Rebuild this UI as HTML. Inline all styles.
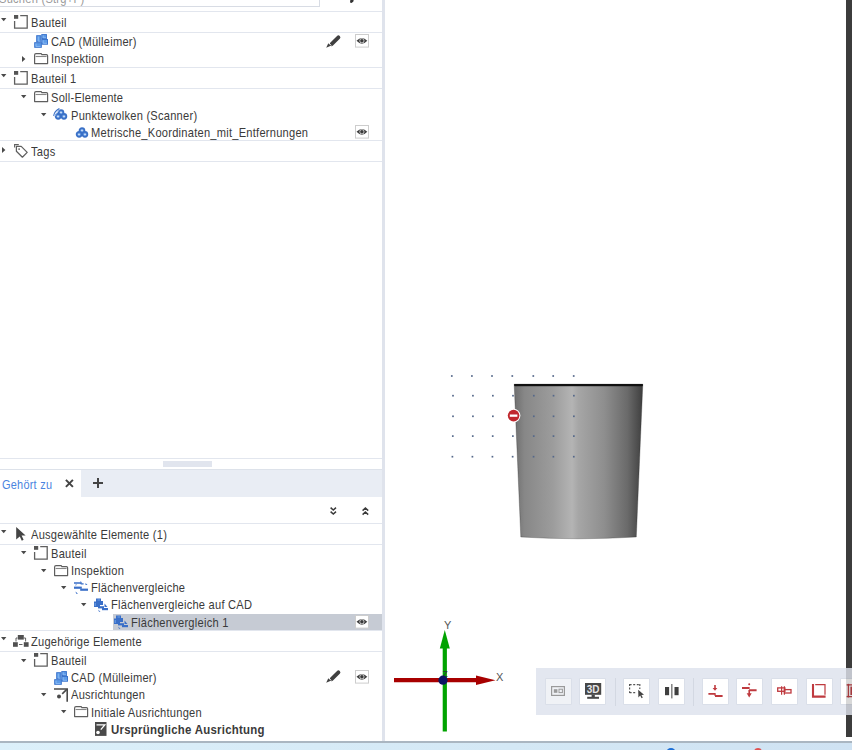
<!DOCTYPE html><html><head><meta charset="utf-8"><style>html,body{margin:0;padding:0;}body{width:852px;height:750px;overflow:hidden;position:relative;background:#fff;font-family:"Liberation Sans",sans-serif;}</style></head><body>
<div style="position:absolute;left:-2px;top:-9px;width:321.5px;height:16px;background:#fff;border:1px solid #d8dce4;box-sizing:border-box"></div>
<div style="position:absolute;left:-1px;top:-9.00px;font-size:12.7px;line-height:16px;color:#9a9a9a;font-weight:normal;white-space:nowrap;letter-spacing:0.28px;transform:scaleX(0.875);transform-origin:0 0;">Suchen (Strg+F)</div>
<svg style="position:absolute;left:349px;top:0px;overflow:visible" width="6" height="4" viewBox="0 0 6 4"><polygon points="1.4,-1 4.8,-1 4.4,1.6 2.6,3 1,2.4" fill="#333"/></svg>
<div style="position:absolute;left:0px;top:11px;width:382px;height:1px;background:#e2e6ee"></div>
<div style="position:absolute;left:0px;top:32px;width:382px;height:1px;background:#e2e6ee"></div>
<div style="position:absolute;left:0px;top:67px;width:382px;height:1px;background:#e2e6ee"></div>
<div style="position:absolute;left:0px;top:88px;width:382px;height:1px;background:#e2e6ee"></div>
<div style="position:absolute;left:0px;top:140px;width:382px;height:1px;background:#e2e6ee"></div>
<div style="position:absolute;left:0px;top:161px;width:382px;height:1px;background:#e2e6ee"></div>
<svg style="position:absolute;left:0.8px;top:17.999999999999996px;overflow:visible" width="6" height="4" viewBox="0 0 6 4"><polygon points="0,0 5.4,0 2.7,3.2" fill="#4a4a4a"/></svg>
<svg style="position:absolute;left:14px;top:14.999999999999998px;overflow:visible" width="15" height="15" viewBox="0 0 15 15"><rect x="0" y="0" width="4.2" height="3.8" fill="#555"/><path d="M6.2,0.6 H13.2 V13.2 H0.6 V6" fill="none" stroke="#5f5f5f" stroke-width="1.3"/></svg>
<div style="position:absolute;left:31.2px;top:14.60px;font-size:12.7px;line-height:16px;color:#3a3a3a;font-weight:normal;white-space:nowrap;letter-spacing:0.28px;transform:scaleX(0.875);transform-origin:0 0;">Bauteil</div>
<svg style="position:absolute;left:34px;top:34.300000000000004px;overflow:visible" width="15" height="14" viewBox="0 0 15 14"><rect x="2.7" y="1.7" width="4.1" height="6.0" fill="#5d9be8" stroke="#3b74cc" stroke-width="1"/><rect x="7.8" y="0.6" width="4.6" height="3.9000000000000004" fill="#5d9be8" stroke="#3b74cc" stroke-width="1"/><rect x="7.8" y="5.5" width="5.7" height="4.7" fill="#5d9be8" stroke="#3b74cc" stroke-width="1"/><rect x="0.7" y="8.7" width="6.6" height="4.6" fill="#5d9be8" stroke="#3b74cc" stroke-width="1"/><path d="M4.3,2.5 V7.2 H6.5 M9.2,1.4 V3.8 H12 M9.2,6.3 V9.3 H13 M2,9.5 V12.6 H6.5" fill="none" stroke="#8cbcf4" stroke-width="0.9"/></svg>
<div style="position:absolute;left:51.2px;top:34.20px;font-size:12.7px;line-height:16px;color:#3a3a3a;font-weight:normal;white-space:nowrap;letter-spacing:0.28px;transform:scaleX(0.875);transform-origin:0 0;">CAD (Mülleimer)</div>
<svg style="position:absolute;left:22.0px;top:55.8px;overflow:visible" width="4" height="7" viewBox="0 0 4 7"><polygon points="0,0 3.4,3 0,6" fill="#4a4a4a"/></svg>
<svg style="position:absolute;left:34px;top:52.75px;overflow:visible" width="15" height="12" viewBox="0 0 15 12"><path d="M0.6,10.6 V2.0 Q0.6,0.6 2.0,0.6 H7.2 L7.9,1.6 H12.4 Q13.6,1.6 13.6,2.8 V10.6 Z" fill="none" stroke="#5f5f5f" stroke-width="1.2" stroke-linejoin="round"/><path d="M1.6,3.5 H12.6" stroke="#888" stroke-width="1.1"/></svg>
<div style="position:absolute;left:51.2px;top:51.40px;font-size:12.7px;line-height:16px;color:#3a3a3a;font-weight:normal;white-space:nowrap;letter-spacing:0.28px;transform:scaleX(0.875);transform-origin:0 0;">Inspektion</div>
<svg style="position:absolute;left:0.8px;top:74.2px;overflow:visible" width="6" height="4" viewBox="0 0 6 4"><polygon points="0,0 5.4,0 2.7,3.2" fill="#4a4a4a"/></svg>
<svg style="position:absolute;left:14px;top:71.19999999999999px;overflow:visible" width="15" height="15" viewBox="0 0 15 15"><rect x="0" y="0" width="4.2" height="3.8" fill="#555"/><path d="M6.2,0.6 H13.2 V13.2 H0.6 V6" fill="none" stroke="#5f5f5f" stroke-width="1.3"/></svg>
<div style="position:absolute;left:31.2px;top:70.80px;font-size:12.7px;line-height:16px;color:#3a3a3a;font-weight:normal;white-space:nowrap;letter-spacing:0.28px;transform:scaleX(0.875);transform-origin:0 0;">Bauteil 1</div>
<svg style="position:absolute;left:20.8px;top:95.4px;overflow:visible" width="6" height="4" viewBox="0 0 6 4"><polygon points="0,0 5.4,0 2.7,3.2" fill="#4a4a4a"/></svg>
<svg style="position:absolute;left:34px;top:91.35px;overflow:visible" width="15" height="12" viewBox="0 0 15 12"><path d="M0.6,10.6 V2.0 Q0.6,0.6 2.0,0.6 H7.2 L7.9,1.6 H12.4 Q13.6,1.6 13.6,2.8 V10.6 Z" fill="none" stroke="#5f5f5f" stroke-width="1.2" stroke-linejoin="round"/><path d="M1.6,3.5 H12.6" stroke="#888" stroke-width="1.1"/></svg>
<div style="position:absolute;left:51.2px;top:90.00px;font-size:12.7px;line-height:16px;color:#3a3a3a;font-weight:normal;white-space:nowrap;letter-spacing:0.28px;transform:scaleX(0.875);transform-origin:0 0;">Soll-Elemente</div>
<svg style="position:absolute;left:40.8px;top:112.9px;overflow:visible" width="6" height="4" viewBox="0 0 6 4"><polygon points="0,0 5.4,0 2.7,3.2" fill="#4a4a4a"/></svg>
<svg style="position:absolute;left:55.4px;top:110.10000000000001px;overflow:visible" width="12" height="10" viewBox="0 0 12 10"><circle cx="6" cy="2.7" r="2.5" fill="#74a6e8" stroke="#3a70c6" stroke-width="1.7"/><circle cx="3.1" cy="6.3" r="2.5" fill="#74a6e8" stroke="#3a70c6" stroke-width="1.7"/><circle cx="8.9" cy="6.3" r="2.5" fill="#74a6e8" stroke="#3a70c6" stroke-width="1.7"/><rect x="5.3" y="1.7999999999999998" width="1.4" height="1.2" fill="#e8f0fb"/><rect x="2.3" y="5.9" width="1.4" height="1.2" fill="#e8f0fb"/><rect x="8.3" y="5.9" width="1.4" height="1.2" fill="#e8f0fb"/><path d="M-1.4,5.8 Q-0.6,1.4 4.4,-1.4" fill="none" stroke="#3a70c6" stroke-width="1.1"/><path d="M0.2,6 Q0.6,3 4.4,0.4" fill="none" stroke="#8fb6ea" stroke-width="0.9"/></svg>
<div style="position:absolute;left:71.2px;top:107.50px;font-size:12.7px;line-height:16px;color:#3a3a3a;font-weight:normal;white-space:nowrap;letter-spacing:0.28px;transform:scaleX(0.875);transform-origin:0 0;">Punktewolken (Scanner)</div>
<svg style="position:absolute;left:76.2px;top:127.6px;overflow:visible" width="12" height="10" viewBox="0 0 12 10"><circle cx="6" cy="2.7" r="2.5" fill="#74a6e8" stroke="#3a70c6" stroke-width="1.7"/><circle cx="3.1" cy="6.3" r="2.5" fill="#74a6e8" stroke="#3a70c6" stroke-width="1.7"/><circle cx="8.9" cy="6.3" r="2.5" fill="#74a6e8" stroke="#3a70c6" stroke-width="1.7"/><rect x="5.3" y="1.7999999999999998" width="1.4" height="1.2" fill="#e8f0fb"/><rect x="2.3" y="5.9" width="1.4" height="1.2" fill="#e8f0fb"/><rect x="8.3" y="5.9" width="1.4" height="1.2" fill="#e8f0fb"/></svg>
<div style="position:absolute;left:91.2px;top:125.00px;font-size:12.7px;line-height:16px;color:#3a3a3a;font-weight:normal;white-space:nowrap;letter-spacing:0.28px;transform:scaleX(0.875);transform-origin:0 0;">Metrische_Koordinaten_mit_Entfernungen</div>
<svg style="position:absolute;left:2.0px;top:146.6px;overflow:visible" width="4" height="7" viewBox="0 0 4 7"><polygon points="0,0 3.4,3 0,6" fill="#4a4a4a"/></svg>
<svg style="position:absolute;left:14px;top:144.45px;overflow:visible" width="15" height="14" viewBox="0 0 15 14"><path d="M0.6,3.6 V0.6 H4.8" fill="none" stroke="#5f5f5f" stroke-width="1.1"/><path d="M2.4,2.4 H7.2 L13.2,8.4 L8.4,13.2 L2.4,7.2 Z" fill="none" stroke="#5f5f5f" stroke-width="1.25" stroke-linejoin="round"/><circle cx="5.1" cy="5.1" r="0.9" fill="#5f5f5f"/></svg>
<div style="position:absolute;left:31.2px;top:143.80px;font-size:12.7px;line-height:16px;color:#3a3a3a;font-weight:normal;white-space:nowrap;letter-spacing:0.28px;transform:scaleX(0.875);transform-origin:0 0;">Tags</div>
<svg style="position:absolute;left:325.5px;top:34.5px;overflow:visible" width="14" height="13" viewBox="0 0 14 13"><path d="M12.4,2.4 L5.6,9.2" stroke="#404040" stroke-width="3.9" stroke-linecap="round"/><polygon points="2.3,8.2 4.8,10.7 0.2,12.7" fill="#404040"/><path d="M2.5,7.6 L5.4,10.5" stroke="#fff" stroke-width="0.8"/></svg>
<svg style="position:absolute;left:355px;top:34px;overflow:visible" width="14" height="14" viewBox="0 0 14 14"><rect x="0.5" y="0.5" width="13" height="12.6" fill="#fff" stroke="#cdcdcd" stroke-width="1"/><path d="M1.5,6.8 Q6.9,1.0 12.3,6.8 Q6.9,12.6 1.5,6.8 Z" fill="#3c3c3c"/><circle cx="6.9" cy="6.8" r="2.5" fill="#d0d0d0"/><circle cx="6.9" cy="6.8" r="1.7" fill="#3a3a3a"/></svg>
<svg style="position:absolute;left:355px;top:124.5px;overflow:visible" width="14" height="14" viewBox="0 0 14 14"><rect x="0.5" y="0.5" width="13" height="12.6" fill="#fff" stroke="#cdcdcd" stroke-width="1"/><path d="M1.5,6.8 Q6.9,1.0 12.3,6.8 Q6.9,12.6 1.5,6.8 Z" fill="#3c3c3c"/><circle cx="6.9" cy="6.8" r="2.5" fill="#d0d0d0"/><circle cx="6.9" cy="6.8" r="1.7" fill="#3a3a3a"/></svg>
<div style="position:absolute;left:0px;top:458px;width:382px;height:1px;background:#e2e6ee"></div>
<div style="position:absolute;left:163px;top:461px;width:48.5px;height:6px;background:#e1e5ee;"></div>
<div style="position:absolute;left:0px;top:469px;width:382px;height:1px;background:#dde2ea"></div>
<div style="position:absolute;left:81px;top:470px;width:301px;height:27px;background:#e9edf4;"></div>
<div style="position:absolute;left:2.2px;top:476.67px;font-size:12.5px;line-height:16px;color:#4a84e0;font-weight:normal;white-space:nowrap;letter-spacing:0.28px;transform:scaleX(0.875);transform-origin:0 0;">Gehört zu</div>
<svg style="position:absolute;left:65.3px;top:479.2px;overflow:visible" width="9" height="9" viewBox="0 0 9 9"><path d="M0.9,0.9 L7.9,7.9 M7.9,0.9 L0.9,7.9" stroke="#444" stroke-width="2"/></svg>
<svg style="position:absolute;left:92.5px;top:478px;overflow:visible" width="11" height="11" viewBox="0 0 11 11"><path d="M5,0 V10 M0,5 H10" stroke="#444" stroke-width="2"/></svg>
<svg style="position:absolute;left:329.5px;top:506.8px;overflow:visible" width="7" height="8.5" viewBox="0 0 7 8.5"><path d="M0.6,0.6 L3.3,3 L6,0.6 M0.6,4.6 L3.3,7 L6,4.6" fill="none" stroke="#3a3a3a" stroke-width="1.5"/></svg>
<svg style="position:absolute;left:362px;top:507.2px;overflow:visible" width="7" height="8.5" viewBox="0 0 7 8.5"><path d="M0.6,3.6 L3.4,1 L6.2,3.6 M0.6,7.6 L3.4,5 L6.2,7.6" fill="none" stroke="#3a3a3a" stroke-width="1.5"/></svg>
<div style="position:absolute;left:0px;top:523px;width:382px;height:1px;background:#e2e6ee"></div>
<div style="position:absolute;left:0px;top:544px;width:382px;height:1px;background:#e2e6ee"></div>
<div style="position:absolute;left:0px;top:630px;width:382px;height:1px;background:#e2e6ee"></div>
<div style="position:absolute;left:0px;top:651px;width:382px;height:1px;background:#e2e6ee"></div>
<div style="position:absolute;left:113px;top:614px;width:269px;height:16.3px;background:#c6cbd4;"></div>
<svg style="position:absolute;left:0.8px;top:530.0px;overflow:visible" width="6" height="4" viewBox="0 0 6 4"><polygon points="0,0 5.4,0 2.7,3.2" fill="#4a4a4a"/></svg>
<svg style="position:absolute;left:16.2px;top:526.5px;overflow:visible" width="11" height="15" viewBox="0 0 11 15"><polygon points="0.2,0 9.6,8.4 5.6,8.6 7.6,12.8 5.8,13.8 3.8,9.6 0.2,12.4" fill="#444"/></svg>
<div style="position:absolute;left:31.2px;top:526.60px;font-size:12.7px;line-height:16px;color:#3a3a3a;font-weight:normal;white-space:nowrap;letter-spacing:0.28px;transform:scaleX(0.875);transform-origin:0 0;">Ausgewählte Elemente (1)</div>
<svg style="position:absolute;left:20.8px;top:551.4px;overflow:visible" width="6" height="4" viewBox="0 0 6 4"><polygon points="0,0 5.4,0 2.7,3.2" fill="#4a4a4a"/></svg>
<svg style="position:absolute;left:34px;top:546.1px;overflow:visible" width="15" height="15" viewBox="0 0 15 15"><rect x="0" y="0" width="4.2" height="3.8" fill="#555"/><path d="M6.2,0.6 H13.2 V13.2 H0.6 V6" fill="none" stroke="#5f5f5f" stroke-width="1.3"/></svg>
<div style="position:absolute;left:51.2px;top:545.80px;font-size:12.7px;line-height:16px;color:#3a3a3a;font-weight:normal;white-space:nowrap;letter-spacing:0.28px;transform:scaleX(0.875);transform-origin:0 0;">Bauteil</div>
<svg style="position:absolute;left:40.8px;top:568.6px;overflow:visible" width="6" height="4" viewBox="0 0 6 4"><polygon points="0,0 5.4,0 2.7,3.2" fill="#4a4a4a"/></svg>
<svg style="position:absolute;left:54px;top:564.5500000000001px;overflow:visible" width="15" height="12" viewBox="0 0 15 12"><path d="M0.6,10.6 V2.0 Q0.6,0.6 2.0,0.6 H7.2 L7.9,1.6 H12.4 Q13.6,1.6 13.6,2.8 V10.6 Z" fill="none" stroke="#5f5f5f" stroke-width="1.2" stroke-linejoin="round"/><path d="M1.6,3.5 H12.6" stroke="#888" stroke-width="1.1"/></svg>
<div style="position:absolute;left:71.2px;top:563.00px;font-size:12.7px;line-height:16px;color:#3a3a3a;font-weight:normal;white-space:nowrap;letter-spacing:0.28px;transform:scaleX(0.875);transform-origin:0 0;">Inspektion</div>
<svg style="position:absolute;left:60.8px;top:585.8px;overflow:visible" width="6" height="4" viewBox="0 0 6 4"><polygon points="0,0 5.4,0 2.7,3.2" fill="#4a4a4a"/></svg>
<svg style="position:absolute;left:74px;top:580.8px;overflow:visible" width="14" height="14" viewBox="0 0 14 14"><path d="M0,2 H6.5 L7.2,2.8 H9.6" fill="none" stroke="#3a6fc8" stroke-width="1.3"/><rect x="0" y="5.6" width="7.8" height="2.2" fill="#3a6fc8"/><rect x="6.2" y="7.6" width="7.8" height="2.2" fill="#3a6fc8"/><polygon points="6.5,0 8.2,1.8 6.5,1.8" fill="#3a6fc8"/><polygon points="11.5,2 13.5,4 11.5,4" fill="#3a6fc8"/><polygon points="1.5,3.6 3.2,3.6 1.5,4.8" fill="#3a6fc8"/><polygon points="1.5,10.5 4,12.8 2.2,12.8" fill="#3a6fc8"/></svg>
<div style="position:absolute;left:91.2px;top:580.20px;font-size:12.7px;line-height:16px;color:#3a3a3a;font-weight:normal;white-space:nowrap;letter-spacing:0.28px;transform:scaleX(0.875);transform-origin:0 0;">Flächenvergleiche</div>
<svg style="position:absolute;left:80.8px;top:603.0px;overflow:visible" width="6" height="4" viewBox="0 0 6 4"><polygon points="0,0 5.4,0 2.7,3.2" fill="#4a4a4a"/></svg>
<svg style="position:absolute;left:94px;top:597.6px;overflow:visible" width="15" height="14" viewBox="0 0 15 14"><rect x="2" y="0.5" width="5" height="4.5" fill="#3a6fc8"/><rect x="0" y="3.5" width="6" height="5.5" fill="#3a6fc8"/><rect x="5" y="3" width="4" height="4" fill="#3a6fc8"/><path d="M1.2,5 V8 M3.5,2 H6" stroke="#7fb3f0" stroke-width="0.8"/><rect x="4" y="8.2" width="6" height="2.2" fill="#3a6fc8"/><rect x="8" y="10" width="6" height="2.2" fill="#3a6fc8"/><polygon points="10.5,5.5 13.5,9 10.5,9" fill="#3a6fc8"/><polygon points="4,11.5 6.5,13.8 5,13.8" fill="#3a6fc8"/></svg>
<div style="position:absolute;left:111.2px;top:597.40px;font-size:12.7px;line-height:16px;color:#3a3a3a;font-weight:normal;white-space:nowrap;letter-spacing:0.28px;transform:scaleX(0.875);transform-origin:0 0;">Flächenvergleiche auf CAD</div>
<svg style="position:absolute;left:114px;top:614.8px;overflow:visible" width="15" height="14" viewBox="0 0 15 14"><rect x="2" y="0.5" width="5" height="4.5" fill="#3a6fc8"/><rect x="0" y="3.5" width="6" height="5.5" fill="#3a6fc8"/><rect x="5" y="3" width="4" height="4" fill="#3a6fc8"/><path d="M1.2,5 V8 M3.5,2 H6" stroke="#7fb3f0" stroke-width="0.8"/><rect x="4" y="8.2" width="6" height="2.2" fill="#3a6fc8"/><rect x="8" y="10" width="6" height="2.2" fill="#3a6fc8"/><polygon points="10.5,5.5 13.5,9 10.5,9" fill="#3a6fc8"/><polygon points="4,11.5 6.5,13.8 5,13.8" fill="#3a6fc8"/></svg>
<div style="position:absolute;left:131.2px;top:614.60px;font-size:12.7px;line-height:16px;color:#3a3a3a;font-weight:normal;white-space:nowrap;letter-spacing:0.28px;transform:scaleX(0.875);transform-origin:0 0;">Flächenvergleich 1</div>
<svg style="position:absolute;left:355px;top:614.6px;overflow:visible" width="14" height="14" viewBox="0 0 14 14"><rect x="0.5" y="0.5" width="13" height="12.6" fill="#fff" stroke="#cdcdcd" stroke-width="1"/><path d="M1.5,6.8 Q6.9,1.0 12.3,6.8 Q6.9,12.6 1.5,6.8 Z" fill="#3c3c3c"/><circle cx="6.9" cy="6.8" r="2.5" fill="#d0d0d0"/><circle cx="6.9" cy="6.8" r="1.7" fill="#3a3a3a"/></svg>
<svg style="position:absolute;left:0.8px;top:637.1px;overflow:visible" width="6" height="4" viewBox="0 0 6 4"><polygon points="0,0 5.4,0 2.7,3.2" fill="#4a4a4a"/></svg>
<svg style="position:absolute;left:13.2px;top:635.2px;overflow:visible" width="17" height="13" viewBox="0 0 17 13"><rect x="4.8" y="0" width="6" height="4.6" fill="#505050"/><rect x="0" y="7.2" width="4.8" height="4.6" fill="#505050"/><rect x="10.8" y="7.2" width="4.8" height="4.6" fill="#505050"/><path d="M3,6.5 V3 H4.5 M11,3 H12.6 V6.5 M6,9.5 H9.5" fill="none" stroke="#505050" stroke-width="0.9"/></svg>
<div style="position:absolute;left:31.2px;top:633.70px;font-size:12.7px;line-height:16px;color:#3a3a3a;font-weight:normal;white-space:nowrap;letter-spacing:0.28px;transform:scaleX(0.875);transform-origin:0 0;">Zugehörige Elemente</div>
<svg style="position:absolute;left:20.8px;top:658.6px;overflow:visible" width="6" height="4" viewBox="0 0 6 4"><polygon points="0,0 5.4,0 2.7,3.2" fill="#4a4a4a"/></svg>
<svg style="position:absolute;left:34px;top:653.3000000000001px;overflow:visible" width="15" height="15" viewBox="0 0 15 15"><rect x="0" y="0" width="4.2" height="3.8" fill="#555"/><path d="M6.2,0.6 H13.2 V13.2 H0.6 V6" fill="none" stroke="#5f5f5f" stroke-width="1.3"/></svg>
<div style="position:absolute;left:51.2px;top:653.00px;font-size:12.7px;line-height:16px;color:#3a3a3a;font-weight:normal;white-space:nowrap;letter-spacing:0.28px;transform:scaleX(0.875);transform-origin:0 0;">Bauteil</div>
<svg style="position:absolute;left:54px;top:670.5000000000001px;overflow:visible" width="15" height="14" viewBox="0 0 15 14"><rect x="2.7" y="1.7" width="4.1" height="6.0" fill="#5d9be8" stroke="#3b74cc" stroke-width="1"/><rect x="7.8" y="0.6" width="4.6" height="3.9000000000000004" fill="#5d9be8" stroke="#3b74cc" stroke-width="1"/><rect x="7.8" y="5.5" width="5.7" height="4.7" fill="#5d9be8" stroke="#3b74cc" stroke-width="1"/><rect x="0.7" y="8.7" width="6.6" height="4.6" fill="#5d9be8" stroke="#3b74cc" stroke-width="1"/><path d="M4.3,2.5 V7.2 H6.5 M9.2,1.4 V3.8 H12 M9.2,6.3 V9.3 H13 M2,9.5 V12.6 H6.5" fill="none" stroke="#8cbcf4" stroke-width="0.9"/></svg>
<div style="position:absolute;left:71.2px;top:670.20px;font-size:12.7px;line-height:16px;color:#3a3a3a;font-weight:normal;white-space:nowrap;letter-spacing:0.28px;transform:scaleX(0.875);transform-origin:0 0;">CAD (Mülleimer)</div>
<svg style="position:absolute;left:40.8px;top:693.0px;overflow:visible" width="6" height="4" viewBox="0 0 6 4"><polygon points="0,0 5.4,0 2.7,3.2" fill="#4a4a4a"/></svg>
<svg style="position:absolute;left:54px;top:687.7px;overflow:visible" width="15" height="15" viewBox="0 0 15 15"><path d="M0,1 H13.2 V13.8" fill="none" stroke="#4a4a4a" stroke-width="1.6"/><path d="M12.8,1.4 L8.2,5.8" stroke="#4a4a4a" stroke-width="1.6"/><circle cx="5" cy="8.6" r="2" fill="#4a4a4a"/></svg>
<div style="position:absolute;left:71.2px;top:687.40px;font-size:12.7px;line-height:16px;color:#3a3a3a;font-weight:normal;white-space:nowrap;letter-spacing:0.28px;transform:scaleX(0.875);transform-origin:0 0;">Ausrichtungen</div>
<svg style="position:absolute;left:60.8px;top:710.2px;overflow:visible" width="6" height="4" viewBox="0 0 6 4"><polygon points="0,0 5.4,0 2.7,3.2" fill="#4a4a4a"/></svg>
<svg style="position:absolute;left:74px;top:706.1500000000001px;overflow:visible" width="15" height="12" viewBox="0 0 15 12"><path d="M0.6,10.6 V2.0 Q0.6,0.6 2.0,0.6 H7.2 L7.9,1.6 H12.4 Q13.6,1.6 13.6,2.8 V10.6 Z" fill="none" stroke="#5f5f5f" stroke-width="1.2" stroke-linejoin="round"/><path d="M1.6,3.5 H12.6" stroke="#888" stroke-width="1.1"/></svg>
<div style="position:absolute;left:91.2px;top:704.60px;font-size:12.7px;line-height:16px;color:#3a3a3a;font-weight:normal;white-space:nowrap;letter-spacing:0.28px;transform:scaleX(0.875);transform-origin:0 0;">Initiale Ausrichtungen</div>
<svg style="position:absolute;left:95.2px;top:722.05px;overflow:visible" width="12" height="14" viewBox="0 0 12 14"><rect x="0" y="0" width="11.5" height="13.9" fill="#4a4a4a"/><path d="M1.5,2.9 H9.8 L5.8,7.6" fill="none" stroke="#fff" stroke-width="1.3"/><circle cx="3" cy="10.5" r="1.8" fill="#fff"/></svg>
<div style="position:absolute;left:111.2px;top:721.80px;font-size:12.7px;line-height:16px;color:#3a3a3a;font-weight:bold;white-space:nowrap;letter-spacing:0.28px;transform:scaleX(0.9);transform-origin:0 0;">Ursprüngliche Ausrichtung</div>
<svg style="position:absolute;left:325.5px;top:670px;overflow:visible" width="14" height="13" viewBox="0 0 14 13"><path d="M12.4,2.4 L5.6,9.2" stroke="#404040" stroke-width="3.9" stroke-linecap="round"/><polygon points="2.3,8.2 4.8,10.7 0.2,12.7" fill="#404040"/><path d="M2.5,7.6 L5.4,10.5" stroke="#fff" stroke-width="0.8"/></svg>
<svg style="position:absolute;left:355px;top:670px;overflow:visible" width="14" height="14" viewBox="0 0 14 14"><rect x="0.5" y="0.5" width="13" height="12.6" fill="#fff" stroke="#cdcdcd" stroke-width="1"/><path d="M1.5,6.8 Q6.9,1.0 12.3,6.8 Q6.9,12.6 1.5,6.8 Z" fill="#3c3c3c"/><circle cx="6.9" cy="6.8" r="2.5" fill="#d0d0d0"/><circle cx="6.9" cy="6.8" r="1.7" fill="#3a3a3a"/></svg>
<div style="position:absolute;left:382px;top:0px;width:3px;height:741px;background:#dfe3ec;"></div>
<div style="position:absolute;left:846px;top:0px;width:6px;height:737px;background:#3c3c3c;"></div>
<svg style="position:absolute;left:0;top:0" width="852" height="750" viewBox="0 0 852 750">
<defs><linearGradient id="bg" x1="514" y1="0" x2="643" y2="0" gradientUnits="userSpaceOnUse">
<stop offset="0" stop-color="#6e6e6e"/><stop offset="0.08" stop-color="#878787"/><stop offset="0.3" stop-color="#9c9c9c"/>
<stop offset="0.45" stop-color="#b4b4b4"/><stop offset="0.5" stop-color="#a6a6a6"/><stop offset="0.7" stop-color="#8e8e8e"/>
<stop offset="0.88" stop-color="#6a6a6a"/><stop offset="1" stop-color="#3e3e3e"/></linearGradient></defs>
<path d="M514.2,384.2 L642.8,384.2 L636.3,537 Q578,540.5 520.8,537 Z" fill="url(#bg)" stroke="rgba(40,40,40,0.5)" stroke-width="0.6"/>
<path d="M514.2,385 L642.8,385" stroke="#111" stroke-width="2"/><path d="M514.6,386.5 L642.4,386.5" stroke="rgba(0,0,0,0.18)" stroke-width="1.2"/>

<rect x="450.95" y="375.15" width="1.7" height="1.7" fill="#56698a"/><rect x="471.05" y="375.15" width="1.7" height="1.7" fill="#56698a"/><rect x="491.15" y="375.15" width="1.7" height="1.7" fill="#56698a"/><rect x="511.45" y="375.15" width="1.7" height="1.7" fill="#56698a"/><rect x="532.45" y="375.15" width="1.7" height="1.7" fill="#56698a"/><rect x="552.35" y="375.15" width="1.7" height="1.7" fill="#56698a"/><rect x="572.85" y="375.15" width="1.7" height="1.7" fill="#56698a"/><rect x="452.15" y="394.85" width="1.7" height="1.7" fill="#56698a"/><rect x="472.08" y="394.85" width="1.7" height="1.7" fill="#56698a"/><rect x="492.01" y="394.85" width="1.7" height="1.7" fill="#56698a"/><rect x="512.14" y="394.85" width="1.7" height="1.7" fill="#56698a"/><rect x="532.96" y="394.85" width="1.7" height="1.7" fill="#56698a"/><rect x="552.69" y="394.85" width="1.7" height="1.7" fill="#56698a"/><rect x="573.02" y="394.85" width="1.7" height="1.7" fill="#56698a"/><rect x="452.15" y="415.45" width="1.7" height="1.7" fill="#56698a"/><rect x="472.08" y="415.45" width="1.7" height="1.7" fill="#56698a"/><rect x="492.01" y="415.45" width="1.7" height="1.7" fill="#56698a"/><rect x="512.14" y="415.45" width="1.7" height="1.7" fill="#56698a"/><rect x="532.96" y="415.45" width="1.7" height="1.7" fill="#56698a"/><rect x="552.69" y="415.45" width="1.7" height="1.7" fill="#56698a"/><rect x="573.02" y="415.45" width="1.7" height="1.7" fill="#56698a"/><rect x="451.95" y="435.25" width="1.7" height="1.7" fill="#56698a"/><rect x="471.91" y="435.25" width="1.7" height="1.7" fill="#56698a"/><rect x="491.86" y="435.25" width="1.7" height="1.7" fill="#56698a"/><rect x="512.02" y="435.25" width="1.7" height="1.7" fill="#56698a"/><rect x="532.88" y="435.25" width="1.7" height="1.7" fill="#56698a"/><rect x="552.64" y="435.25" width="1.7" height="1.7" fill="#56698a"/><rect x="572.99" y="435.25" width="1.7" height="1.7" fill="#56698a"/><rect x="451.55" y="455.85" width="1.7" height="1.7" fill="#56698a"/><rect x="471.56" y="455.85" width="1.7" height="1.7" fill="#56698a"/><rect x="491.58" y="455.85" width="1.7" height="1.7" fill="#56698a"/><rect x="511.79" y="455.85" width="1.7" height="1.7" fill="#56698a"/><rect x="532.71" y="455.85" width="1.7" height="1.7" fill="#56698a"/><rect x="552.52" y="455.85" width="1.7" height="1.7" fill="#56698a"/><rect x="572.94" y="455.85" width="1.7" height="1.7" fill="#56698a"/>
<circle cx="513.6" cy="415.6" r="6.8" fill="#fff"/><circle cx="513.6" cy="415.6" r="5.8" fill="#c0272d"/><rect x="509.8" y="414.5" width="7.6" height="2.3" fill="#fff"/>
<path d="M394,680.2 H478" stroke="#a80000" stroke-width="4.2"/>
<polygon points="476,675.4 495.5,680.2 476,685" fill="#a80000"/>
<path d="M444.8,646 V731.5" stroke="#00a300" stroke-width="4.2"/>
<polygon points="439.8,648.5 444.8,630 449.8,648.5" fill="#00a300"/>
<text x="442.5" y="676.5" font-family="Liberation Sans" font-size="8.5" fill="#333">Z</text>
<circle cx="443" cy="680.2" r="4.6" fill="#0c1463"/>
<text x="444" y="629" font-family="Liberation Sans" font-size="11" fill="#555">Y</text>
<text x="496" y="681" font-family="Liberation Sans" font-size="11" fill="#555">X</text>
</svg>
<div style="position:absolute;left:536px;top:668px;width:316px;height:47px;background:#e3e7f0"></div>
<div style="position:absolute;left:545.8px;top:678.8px;width:25px;height:24.8px;background:#f0f2f6;box-shadow:0 0 0 0.6px #d5dae4"></div>
<div style="position:absolute;left:580.4px;top:678.8px;width:25px;height:24.8px;background:#fff;box-shadow:0 0 0 0.6px #d5dae4"></div>
<div style="position:absolute;left:615px;top:677.6px;width:1px;height:28px;background:#d3d8e2"></div>
<div style="position:absolute;left:624.4px;top:678.8px;width:25px;height:24.8px;background:#fff;box-shadow:0 0 0 0.6px #d5dae4"></div>
<div style="position:absolute;left:658.8px;top:678.8px;width:25px;height:24.8px;background:#fff;box-shadow:0 0 0 0.6px #d5dae4"></div>
<div style="position:absolute;left:693px;top:677.6px;width:1px;height:28px;background:#d3d8e2"></div>
<div style="position:absolute;left:702.8px;top:678.8px;width:25px;height:24.8px;background:#fff;box-shadow:0 0 0 0.6px #d5dae4"></div>
<div style="position:absolute;left:737.4px;top:678.8px;width:25px;height:24.8px;background:#fff;box-shadow:0 0 0 0.6px #d5dae4"></div>
<div style="position:absolute;left:771.8px;top:678.8px;width:25px;height:24.8px;background:#fff;box-shadow:0 0 0 0.6px #d5dae4"></div>
<div style="position:absolute;left:806.8px;top:678.8px;width:25px;height:24.8px;background:#fff;box-shadow:0 0 0 0.6px #d5dae4"></div>
<div style="position:absolute;left:841.2px;top:678.8px;width:25px;height:24.8px;background:#fff;box-shadow:0 0 0 0.6px #d5dae4"></div>
<svg style="position:absolute;left:551px;top:685.8px;overflow:visible" width="14" height="10" viewBox="0 0 14 10"><rect x="0.6" y="0.6" width="12.8" height="8.8" fill="none" stroke="#9a9a9a" stroke-width="1.2"/><rect x="2.8" y="3.2" width="3.6" height="3.6" fill="#9a9a9a"/><rect x="8" y="3.2" width="3.4" height="3.4" fill="none" stroke="#9a9a9a" stroke-width="1"/></svg>
<svg style="position:absolute;left:584.8px;top:682.8px;overflow:visible" width="17" height="16" viewBox="0 0 17 16"><rect x="0" y="0" width="16.2" height="11.8" fill="#474747"/><rect x="6.6" y="11.6" width="3.2" height="2.6" fill="#474747"/><rect x="2.2" y="13.8" width="11.8" height="2" fill="#474747"/><text x="8.1" y="10.1" text-anchor="middle" font-family="Liberation Sans" font-weight="bold" font-size="10" fill="#e8e8e8" style="opacity:0.99">3D</text></svg>
<svg style="position:absolute;left:629px;top:684.2px;overflow:visible" width="16" height="15" viewBox="0 0 16 15"><path d="M0.6,0 V9 M0.6,0.6 H11 M10.8,0 V5" fill="none" stroke="#555" stroke-width="1.2" stroke-dasharray="2,1.6"/><path d="M0.6,8.6 H7" stroke="#555" stroke-width="1.2" stroke-dasharray="2,1.6"/><polygon points="9.2,5.8 15,10.8 12.4,11 13.8,13.6 12.6,14.2 11.2,11.6 9.4,13.4" fill="#444"/></svg>
<svg style="position:absolute;left:664.8px;top:683.6px;overflow:visible" width="14" height="15" viewBox="0 0 14 15"><rect x="0" y="3" width="4.1" height="8.2" fill="#3f3f3f"/><rect x="9.5" y="3" width="4.1" height="8.2" fill="#3f3f3f"/><rect x="6.3" y="0" width="1.1" height="14.4" fill="#555"/></svg>
<svg style="position:absolute;left:707.5px;top:684.6px;overflow:visible" width="15" height="13" viewBox="0 0 15 13"><path d="M7,0 V4" stroke="#bf3a3f" stroke-width="1.6"/><polygon points="4.6,3 9.4,3 7,5.8" fill="#bf3a3f"/><path d="M0.4,8.9 H7.6 M7,11 H14.6" stroke="#bf3a3f" stroke-width="1.9"/><path d="M7,8.9 V11" stroke="#bf3a3f" stroke-width="1"/></svg>
<svg style="position:absolute;left:742.4px;top:682.8px;overflow:visible" width="15" height="16" viewBox="0 0 15 16"><circle cx="7.2" cy="1.3" r="1" fill="#bf3a3f"/><path d="M0,5 H7.6 M7,7.2 H14.6" stroke="#bf3a3f" stroke-width="1.9"/><path d="M7.2,7 V11" stroke="#bf3a3f" stroke-width="1.6"/><polygon points="4.7,10.2 9.7,10.2 7.2,14.4" fill="#bf3a3f"/></svg>
<svg style="position:absolute;left:776.8px;top:686.4px;overflow:visible" width="15" height="10" viewBox="0 0 15 10"><rect x="0.7" y="1.9" width="7.2" height="3.4" fill="none" stroke="#bf3a3f" stroke-width="1.3"/><rect x="7.4" y="3.6" width="6.6" height="3.4" fill="none" stroke="#bf3a3f" stroke-width="1.3"/><path d="M4.6,0.2 V8.8 M7.4,0.2 V8.8" stroke="#bf3a3f" stroke-width="1.2"/></svg>
<svg style="position:absolute;left:812px;top:684px;overflow:visible" width="14" height="14" viewBox="0 0 14 14"><path d="M1,0 V12.6 H13.6" fill="none" stroke="#bf3a3f" stroke-width="2.1"/><path d="M3.2,0.6 H13 V10.8" fill="none" stroke="#bf3a3f" stroke-width="1.2"/></svg>
<svg style="position:absolute;left:846.5px;top:684.2px;overflow:visible" width="6" height="14" viewBox="0 0 6 14"><path d="M1.4,0.8 V12.6 M-0.4,0.8 H5 M-0.4,12.6 H5" stroke="#bf3a3f" stroke-width="1.3"/><circle cx="1.4" cy="0.8" r="1" fill="#bf3a3f"/><circle cx="1.4" cy="12.6" r="1" fill="#bf3a3f"/><rect x="3.4" y="2.6" width="3" height="8.4" fill="#bf3a3f"/></svg>
<div style="position:absolute;left:846px;top:668px;width:6px;height:47px;background:rgba(60,60,60,0.2)"></div>
<div style="position:absolute;left:0px;top:740.5px;width:852px;height:2px;background:#aab6c1;"></div>
<div style="position:absolute;left:0px;top:742.5px;width:852px;height:8px;background:linear-gradient(90deg,#dcf0fa,#d4e8f5 60%,#cfe2f2);"></div>
<div style="position:absolute;left:666px;top:747.5px;width:10px;height:10px;border-radius:50%;background:#1e6fd6"></div>
<div style="position:absolute;left:754.4px;top:747.8px;width:8px;height:8px;border-radius:50%;background:#e05050"></div>
</body></html>
